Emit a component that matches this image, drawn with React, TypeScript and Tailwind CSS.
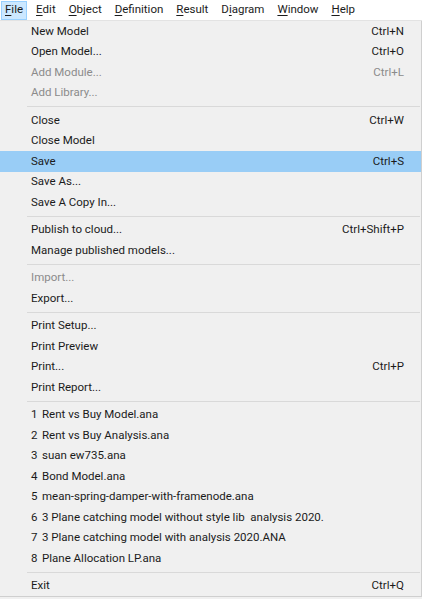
import React from 'react';

type Item =
  | { kind: 'sep' }
  | { kind: 'item'; label: string; shortcut?: string; disabled?: boolean; active?: boolean; num?: string };

const items: Item[] = [
  { kind: 'item', label: 'New Model', shortcut: 'Ctrl+N' },
  { kind: 'item', label: 'Open Model...', shortcut: 'Ctrl+O' },
  { kind: 'item', label: 'Add Module...', shortcut: 'Ctrl+L', disabled: true },
  { kind: 'item', label: 'Add Library...', disabled: true },
  { kind: 'sep' },
  { kind: 'item', label: 'Close', shortcut: 'Ctrl+W' },
  { kind: 'item', label: 'Close Model' },
  { kind: 'item', label: 'Save', shortcut: 'Ctrl+S', active: true },
  { kind: 'item', label: 'Save As...' },
  { kind: 'item', label: 'Save A Copy In...' },
  { kind: 'sep' },
  { kind: 'item', label: 'Publish to cloud...', shortcut: 'Ctrl+Shift+P' },
  { kind: 'item', label: 'Manage published models...' },
  { kind: 'sep' },
  { kind: 'item', label: 'Import...', disabled: true },
  { kind: 'item', label: 'Export...' },
  { kind: 'sep' },
  { kind: 'item', label: 'Print Setup...' },
  { kind: 'item', label: 'Print Preview' },
  { kind: 'item', label: 'Print...', shortcut: 'Ctrl+P' },
  { kind: 'item', label: 'Print Report...' },
  { kind: 'sep' },
  { kind: 'item', num: '1', label: 'Rent vs Buy Model.ana' },
  { kind: 'item', num: '2', label: 'Rent vs Buy Analysis.ana' },
  { kind: 'item', num: '3', label: 'suan ew735.ana' },
  { kind: 'item', num: '4', label: 'Bond Model.ana' },
  { kind: 'item', num: '5', label: 'mean-spring-damper-with-framenode.ana' },
  { kind: 'item', num: '6', label: '3 Plane catching model without style lib\u00a0 analysis 2020.' },
  { kind: 'item', num: '7', label: '3 Plane catching model with analysis 2020.ANA' },
  { kind: 'item', num: '8', label: 'Plane Allocation LP.ana' },
  { kind: 'sep' },
  { kind: 'item', label: 'Exit', shortcut: 'Ctrl+Q' },
];

// menu bar titles, index of the underlined (access key) letter
const menus: [string, number][] = [
  ['File', 0],
  ['Edit', 0],
  ['Object', 0],
  ['Definition', 0],
  ['Result', 0],
  ['Diagram', 1],
  ['Window', 0],
  ['Help', 0],
];

function MenuTitle({ text, u, open }: { text: string; u: number; open?: boolean }) {
  return (
    <div
      className={
        'h-[19px] px-[3px] flex items-center border ' +
        (open ? 'bg-[#cce8ff] border-[#99d1ff]' : 'border-transparent')
      }
    >
      {text.slice(0, u)}
      <span className="underline underline-offset-2">{text[u]}</span>
      {text.slice(u + 1)}
    </div>
  );
}

export default function App() {
  return (
    <div className="w-[422px] h-[599px] bg-[#f0f0f0] text-[11.5px] text-[#1b1b1b] font-['Roboto',sans-serif] overflow-hidden">
      <div className="h-[21px] bg-white flex items-center gap-[5px] pl-[1px] border-b border-[#e3e3e3]">
        {menus.map(([t, u], i) => (
          <MenuTitle key={t} text={t} u={u} open={i === 0} />
        ))}
      </div>

      <div className="border-r border-b border-[#cfcfcf] w-[422px]">
        {items.map((it, i) =>
          it.kind === 'sep' ? (
            <div key={i} className="h-[7px] flex items-center pl-[27px] pr-[1px]">
              <div className="h-px w-full bg-[#d9d9d9]" />
            </div>
          ) : (
            <div
              key={i}
              className={
                'h-[20.5px] flex items-center justify-between pl-[31px] pr-[17px] ' +
                (it.active ? 'bg-[#99cdf6] ' : '') +
                (it.disabled ? 'text-[#8b8b8b]' : '')
              }
            >
              <span className="flex whitespace-pre">
                {it.num && <span className="w-[11px]">{it.num}</span>}
                {it.label}
              </span>
              {it.shortcut && <span>{it.shortcut}</span>}
            </div>
          )
        )}
      </div>
    </div>
  );
}
